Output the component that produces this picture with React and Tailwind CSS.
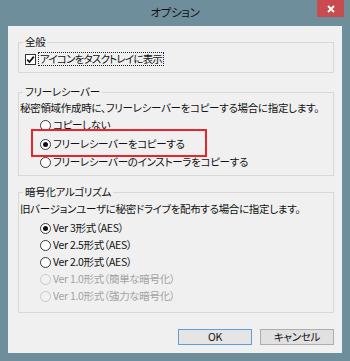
import React from "react";

const font = { fontFamily: '"Noto Sans CJK JP", "Noto Sans", sans-serif', fontFeatureSettings: '"palt"' };

function Radio({ checked, disabled }) {
  return (
    <span
      className={
        disabled
          ? "w-[11px] h-[11px] rounded-full border border-[#c8c8c8] bg-[#f2f2f2] flex items-center justify-center shrink-0"
          : "w-[11px] h-[11px] rounded-full border border-[#3a3a3a] bg-white flex items-center justify-center shrink-0"
      }
    >
      {checked && <span className="w-[5px] h-[5px] rounded-full bg-[#111]" />}
    </span>
  );
}

function RadioRow({ checked, disabled, children, className }) {
  return (
    <div className={"flex items-center h-[14px] leading-[14px] ml-[21px] gap-[2px] whitespace-nowrap " + (className || "")}>
      <Radio checked={checked} disabled={disabled} />
      <span className={disabled ? "text-[#a3a3a3]" : "text-[#111]"}>{children}</span>
    </div>
  );
}

export default function App() {
  return (
    <div
      className="w-[350px] h-[361px] bg-[#6f8e9c] flex flex-col text-[10.5px] tracking-[-0.3px] text-[#111]"
      style={font}
    >
      {/* title bar */}
      <div className="relative h-[26px] flex items-center justify-center shrink-0">
        <span className="text-[11.5px] text-[#111] mb-[1px]">オプション</span>
        <div className="absolute right-[6px] top-0 w-[27px] h-[17px] bg-[#c74b4f] flex items-center justify-center">
          <svg width="8" height="8" viewBox="0 0 8 8">
            <path d="M1 1 L7 7 M7 1 L1 7" stroke="white" strokeWidth="1.8" />
          </svg>
        </div>
      </div>

      {/* client area */}
      <div className="mx-[8px] h-[327px] bg-[#f0f0f0] flex flex-col pl-[10px] pr-[8px] pt-[9px] pb-[8px]">
        {/* group 1 */}
        <fieldset className="border border-[#d8d8d8] pb-[6px]">
          <legend className="ml-[4px] px-[2px] leading-[14px] h-[14px]">全般</legend>
          <div className="flex items-center h-[14px] mt-[3px] ml-[6px] gap-[2px]">
            <span className="w-[11px] h-[11px] border border-[#333] bg-white flex items-center justify-center shrink-0">
              <svg width="9" height="9" viewBox="0 0 9 9">
                <path d="M1.2 4.6 L3.5 7 L7.8 1.6" stroke="#111" strokeWidth="1.7" fill="none" />
              </svg>
            </span>
            <span className="border border-dotted border-[#222] leading-[12px] h-[14px] px-[1px] whitespace-nowrap tracking-[-0.8px]">アイコンをタスクトレイに表示</span>
          </div>
        </fieldset>

        {/* group 2 */}
        <fieldset className="relative border border-[#d8d8d8] mt-[12px] pb-[6px]">
          <legend className="ml-[4px] px-[2px] leading-[14px] h-[14px]">フリーレシーバー</legend>
          <div className="leading-[14px] h-[14px] mt-[2px] pl-[1px] whitespace-nowrap">
            秘密領域作成時に、フリーレシーバーをコピーする場合に指定します。
          </div>
          <RadioRow className="mt-[3px]">コピーしない</RadioRow>
          <RadioRow checked className="mt-[5px]">フリーレシーバーをコピーする</RadioRow>
          <RadioRow className="mt-[4px]">フリーレシーバーのインストーラをコピーする</RadioRow>
          <div className="absolute left-[12px] top-[30px] w-[176px] h-[28px] border-2 border-[#e8242c]" />
        </fieldset>

        {/* group 3 */}
        <fieldset className="border border-[#d8d8d8] mt-[9px] pb-[9px]">
          <legend className="ml-[4px] px-[2px] leading-[14px] h-[14px]">暗号化アルゴリズム</legend>
          <div className="leading-[14px] h-[14px] mt-[3px] pl-[1px] whitespace-nowrap">
            旧バージョンユーザに秘密ドライブを配布する場合に指定します。
          </div>
          <RadioRow checked className="mt-[5px]">Ver 3形式（AES）</RadioRow>
          <RadioRow className="mt-[3px]">Ver 2.5形式（AES）</RadioRow>
          <RadioRow className="mt-[3px]">Ver 2.0形式（AES）</RadioRow>
          <RadioRow disabled className="mt-[3px]">Ver 1.0形式（簡単な暗号化）</RadioRow>
          <RadioRow disabled className="mt-[3px]">Ver 1.0形式（強力な暗号化）</RadioRow>
        </fieldset>

        {/* buttons */}
        <div className="flex justify-end gap-[8px] mt-auto">
          <button className="w-[74px] h-[16px] border border-[#5f9ed8] bg-[#e5e5e5] text-[10.5px] leading-[14px] text-[#111]">
            OK
          </button>
          <button className="w-[74px] h-[16px] border border-[#adadad] bg-[#e1e1e1] text-[10.5px] leading-[14px] text-[#111]">
            キャンセル
          </button>
        </div>
      </div>
    </div>
  );
}
